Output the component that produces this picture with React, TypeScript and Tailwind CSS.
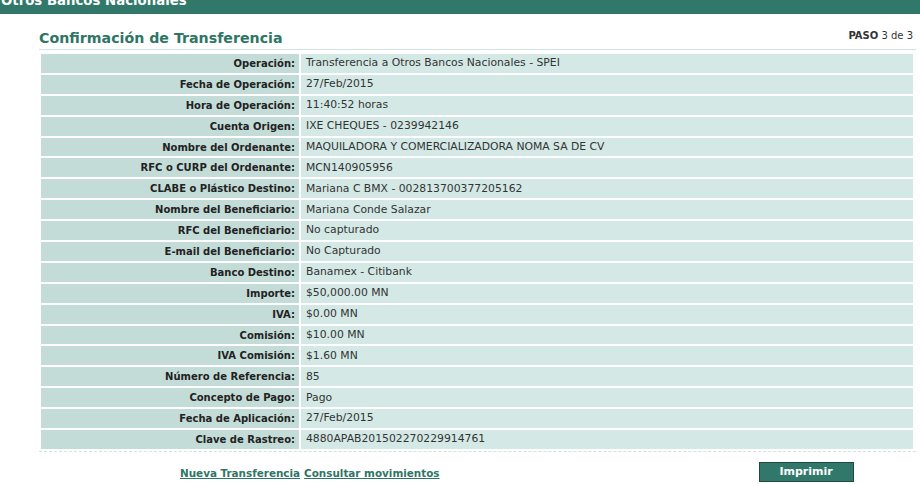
import React from 'react';

const rows: [string, string][] = [
  ['Operación:', 'Transferencia a Otros Bancos Nacionales - SPEI'],
  ['Fecha de Operación:', '27/Feb/2015'],
  ['Hora de Operación:', '11:40:52 horas'],
  ['Cuenta Origen:', 'IXE CHEQUES - 0239942146'],
  ['Nombre del Ordenante:', 'MAQUILADORA Y COMERCIALIZADORA NOMA SA DE CV'],
  ['RFC o CURP del Ordenante:', 'MCN140905956'],
  ['CLABE o Plástico Destino:', 'Mariana C BMX - 002813700377205162'],
  ['Nombre del Beneficiario:', 'Mariana Conde Salazar'],
  ['RFC del Beneficiario:', 'No capturado'],
  ['E-mail del Beneficiario:', 'No Capturado'],
  ['Banco Destino:', 'Banamex - Citibank'],
  ['Importe:', '$50,000.00 MN'],
  ['IVA:', '$0.00 MN'],
  ['Comisión:', '$10.00 MN'],
  ['IVA Comisión:', '$1.60 MN'],
  ['Número de Referencia:', '85'],
  ['Concepto de Pago:', 'Pago'],
  ['Fecha de Aplicación:', '27/Feb/2015'],
  ['Clave de Rastreo:', '4880APAB201502270229914761'],
];

export default function App() {
  return (
    <div className="w-[920px] h-[484px] overflow-hidden bg-white font-['DejaVu_Sans',Verdana,sans-serif] text-[#333]">
      {/* section bar, top half is scrolled out of view */}
      <div className="-mt-[14px] h-[28px] bg-[#32786a] px-[1px] pt-[6px] text-[13.3px] font-bold leading-[17px] text-white">
        Otros Bancos Nacionales
      </div>

      <div className="ml-[39px] w-[877px]">
        <div className="flex items-end justify-between border-b border-[#d3e3df] pb-[2px] pt-[15px]">
          <h1 className="text-[14.2px] font-bold leading-[18px] text-[#2f7565]">Confirmación de Transferencia</h1>
          <span className="mb-[5px] mr-[3px] text-[10px] leading-[12px]">
            <b>PASO</b> 3 de 3
          </span>
        </div>

        <table className="mt-[2px] w-[876px] border-separate border-spacing-x-[2px] border-spacing-y-[2px] text-[10px]">
          <tbody>
            {rows.map(([label, value]) => (
              <tr key={label} className="h-[18.9px]">
                <td className="w-[258px] bg-[#c4dcd7] pr-[4px] text-right font-bold text-[#222]">{label}</td>
                <td className="bg-[#d4e9e5] pl-[5px] text-[10.8px] text-[#333]">{value}</td>
              </tr>
            ))}
          </tbody>
        </table>

        <div className="border-t border-dashed border-[#d3e3df]" />

        <div className="flex items-center pt-[13px]">
          <div className="ml-[141px] flex gap-[4px] text-[10.4px] font-bold text-[#2f7565]">
            <a className="underline">Nueva Transferencia</a>
            <a className="underline">Consultar movimientos</a>
          </div>
          <button className="-mt-[3px] ml-[319px] h-[20px] w-[95px] border border-[#1e4a40] bg-[#32786a] text-[11px] font-bold text-white">
            Imprimir
          </button>
        </div>
      </div>
    </div>
  );
}
